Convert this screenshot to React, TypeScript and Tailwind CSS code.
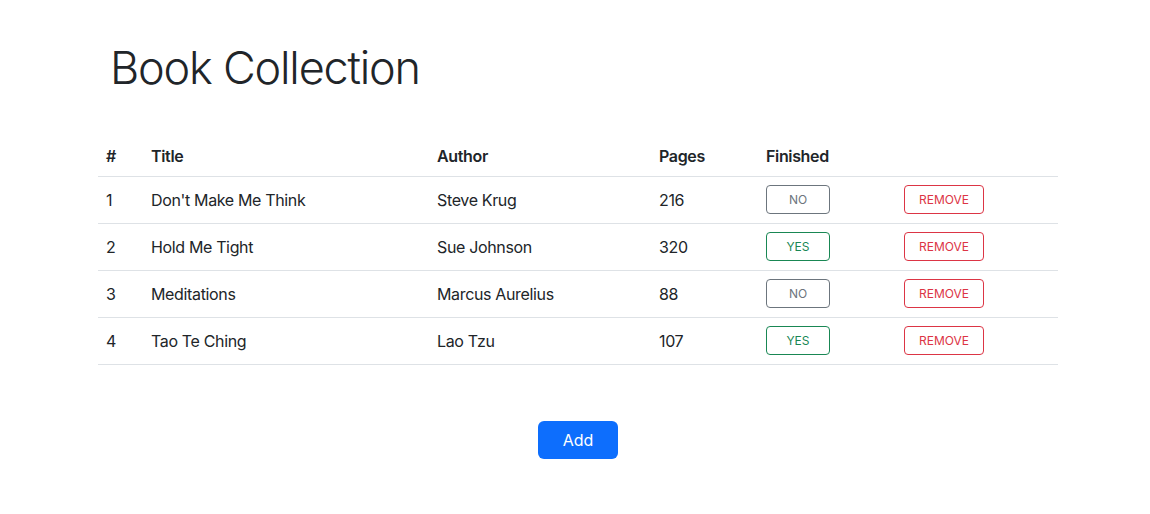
import React, { useState } from 'react';

interface Book {
  id: number;
  title: string;
  author: string;
  pages: number;
  finished: boolean;
}

const INITIAL_BOOKS: Book[] = [
  { id: 1, title: "Don't Make Me Think", author: 'Steve Krug', pages: 216, finished: false },
  { id: 2, title: 'Hold Me Tight', author: 'Sue Johnson', pages: 320, finished: true },
  { id: 3, title: 'Meditations', author: 'Marcus Aurelius', pages: 88, finished: false },
  { id: 4, title: 'Tao Te Ching', author: 'Lao Tzu', pages: 107, finished: true },
];

export default function App() {
  const [books, setBooks] = useState<Book[]>(INITIAL_BOOKS);

  const toggle = (id: number) =>
    setBooks((bs) => bs.map((b) => (b.id === id ? { ...b, finished: !b.finished } : b)));

  const remove = (id: number) => setBooks((bs) => bs.filter((b) => b.id !== id));

  return (
    <div className="min-h-screen bg-white text-[#212529] font-['Inter',sans-serif]">
      <div className="ml-[98px] w-[960px] pt-[38px]">
        {/* Heading */}
        <h1 className="ml-[12px] text-[45px] font-light leading-[60px] tracking-[-1.2px]">Book Collection</h1>

        {/* Books table */}
        <table className="mt-[38px] w-full border-collapse text-[16px] tracking-[-0.35px]">
          <thead>
            <tr className="h-[40px] border-b border-[#dee2e6] text-left font-semibold">
              <th className="w-[45px] px-2 font-semibold">#</th>
              <th className="w-[286px] px-2 font-semibold">Title</th>
              <th className="w-[222px] px-2 font-semibold">Author</th>
              <th className="w-[107px] px-2 font-semibold">Pages</th>
              <th className="w-[138px] px-2 font-semibold">Finished</th>
              <th className="px-2"></th>
            </tr>
          </thead>
          <tbody>
            {books.map((b, i) => (
              <tr key={b.id} className="h-[47px] border-b border-[#dee2e6]">
                <td className="px-2">{i + 1}</td>
                <td className="px-2">{b.title}</td>
                <td className="px-2">{b.author}</td>
                <td className="px-2">{b.pages}</td>
                <td className="px-2">
                  <button
                    onClick={() => toggle(b.id)}
                    className={`flex h-[29px] w-[64px] items-center justify-center rounded-[4px] border text-[12px] uppercase tracking-normal ${
                      b.finished ? 'border-[#198754] text-[#198754]' : 'border-[#6c757d] text-[#6c757d]'
                    }`}
                  >
                    {b.finished ? 'Yes' : 'No'}
                  </button>
                </td>
                <td className="px-2">
                  <button
                    onClick={() => remove(b.id)}
                    className="flex h-[29px] w-[80px] items-center justify-center rounded-[4px] border border-[#dc3545] text-[12px] uppercase tracking-normal text-[#dc3545]"
                  >
                    Remove
                  </button>
                </td>
              </tr>
            ))}
          </tbody>
        </table>

        {/* Add */}
        <div className="mt-[56px] flex justify-center">
          <button className="h-[38px] w-[80px] rounded-[6px] bg-[#0d6efd] text-[16px] text-white">Add</button>
        </div>
      </div>
    </div>
  );
}
